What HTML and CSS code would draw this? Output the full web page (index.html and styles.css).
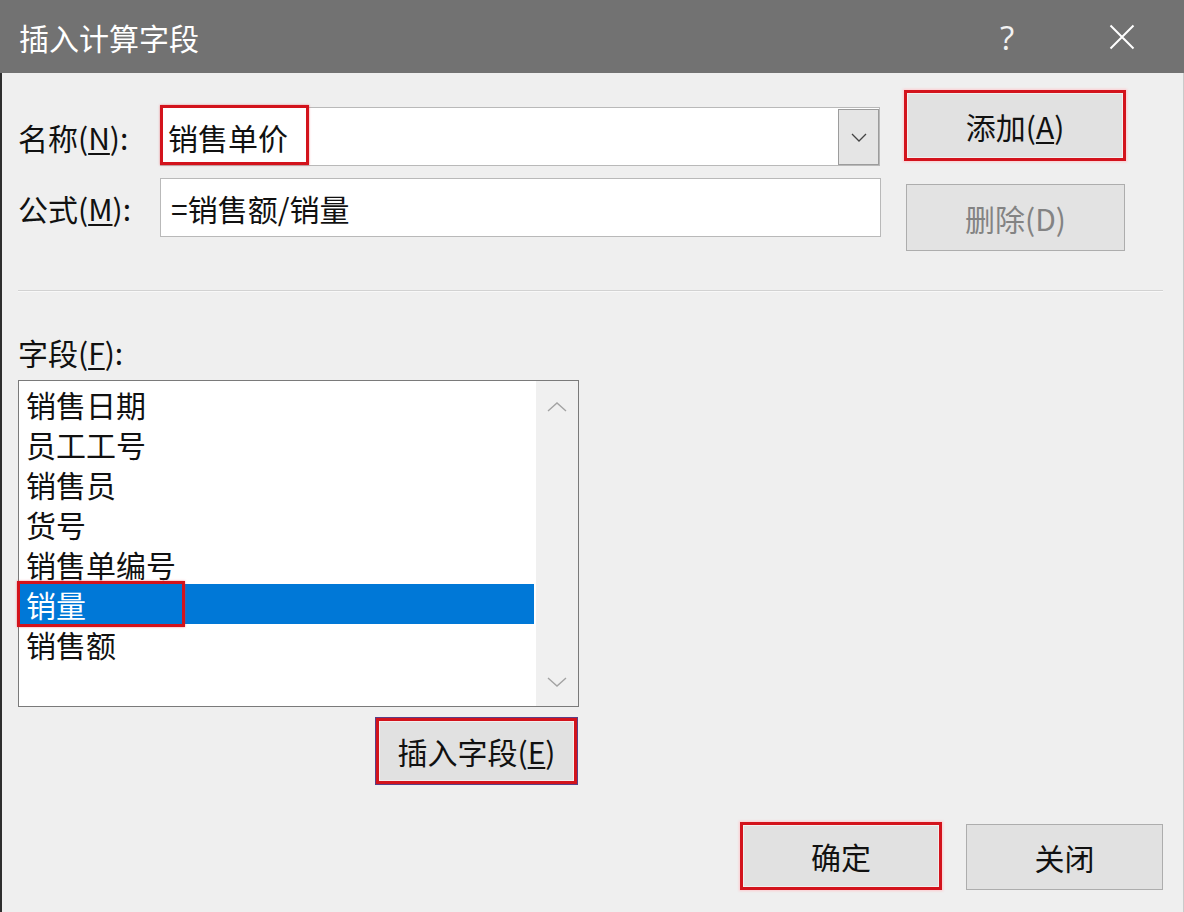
FILE: index.html
```html
<!DOCTYPE html>
<html lang="zh-CN">
<head>
<meta charset="utf-8">
<title>插入计算字段</title>
<link rel="stylesheet" href="styles.css">
</head>
<body>
<div class="dialog">
  <header class="titlebar">
    <h1 class="title">插入计算字段</h1>
    <div class="title-actions">
      <span class="help">?</span>
      <span class="close-x">
        <svg width="26" height="26" viewBox="0 0 26 26"><path d="M1.5 1.5L24.5 24.5M24.5 1.5L1.5 24.5" stroke="#ffffff" stroke-width="2" fill="none"/></svg>
      </span>
    </div>
  </header>
  <main class="content">
    <section class="top">
      <div class="fields">
        <div class="row row-name">
          <label class="label">名称(<u>N</u>):</label>
          <div class="combo">
            <div class="combo-input">
              <span class="value">销售单价</span>
              <span class="mark mark-name"></span>
            </div>
            <div class="combo-btn">
              <svg width="16" height="9" viewBox="0 0 16 9"><path d="M1 1L8 8L15 1" stroke="#444" stroke-width="1.3" fill="none"/></svg>
            </div>
          </div>
        </div>
        <div class="row row-formula">
          <label class="label">公式(<u>M</u>):</label>
          <div class="textbox"><span class="value value-formula">=销售额/销量</span></div>
        </div>
      </div>
      <div class="side-buttons">
        <button class="btn btn-add marked">添加(<u>A</u>)</button>
        <button class="btn btn-delete" disabled>删除(D)</button>
      </div>
    </section>
    <hr class="sep">
    <section class="field-section">
      <div class="label field-label">字段(<u>F</u>):</div>
      <div class="listbox">
        <ul class="items">
          <li>销售日期</li>
          <li>员工工号</li>
          <li>销售员</li>
          <li>货号</li>
          <li>销售单编号</li>
          <li class="selected">销量<span class="mark mark-item"></span></li>
          <li>销售额</li>
        </ul>
        <div class="scrollbar">
          <svg width="20" height="10" viewBox="0 0 20 10"><path d="M1 9L10 1L19 9" stroke="#a3a3a3" stroke-width="1.4" fill="none"/></svg>
          <svg width="20" height="10" viewBox="0 0 20 10"><path d="M1 1L10 9L19 1" stroke="#a3a3a3" stroke-width="1.4" fill="none"/></svg>
        </div>
      </div>
      <button class="btn btn-insert marked">插入字段(<u>E</u>)</button>
    </section>
    <footer class="footer">
      <button class="btn btn-ok marked">确定</button>
      <button class="btn btn-close">关闭</button>
    </footer>
  </main>
</div>
</body>
</html>
```

FILE: styles.css
```css
* {
  box-sizing: border-box;
}

html, body {
  margin: 0;
  padding: 0;
  width: 1184px;
  height: 912px;
  overflow: hidden;
  background: #efefef;
}

body {
  font-family: "Noto Sans CJK SC", "Noto Sans", sans-serif;
  font-size: 30px;
  color: #111;
}

.dialog {
  width: 1184px;
  height: 912px;
  display: flex;
  flex-direction: column;
}

.titlebar {
  height: 73px;
  flex: none;
  background: #727272;
  display: flex;
  align-items: center;
  justify-content: space-between;
  padding-left: 19px;
  padding-right: 40px;
}

.title {
  margin: 0;
  font-size: 30px;
  font-weight: normal;
  color: #ffffff;
  line-height: 36px;
}

.title-actions {
  display: flex;
  align-items: center;
  gap: 73px;
}

.help {
  width: 40px;
  text-align: center;
  color: #f2f2f2;
  font-family: "Open Sans", "Noto Sans", sans-serif;
  font-size: 33px;
  line-height: 36px;
  padding-top: 2px;
}

.close-x {
  width: 44px;
  height: 36px;
  display: flex;
  align-items: center;
  justify-content: center;
}

.content {
  flex: 1;
  display: flex;
  flex-direction: column;
  border-left: 2px solid #2e2e2e;
  border-right: 1px solid #cacaca;
  padding: 0 20px 0 16px;
  background: #efefef;
}

/* top form */
.top {
  display: flex;
  align-items: flex-start;
  height: 178px;
}

.fields {
  width: 863px;
  margin-top: 34px;
  display: flex;
  flex-direction: column;
  gap: 12px;
}

.row {
  display: flex;
  align-items: center;
  height: 59px;
}

.label {
  width: 142px;
  flex: none;
  line-height: 38px;
  color: #111;
}

.label u {
  text-decoration-thickness: 2px;
  text-underline-offset: 3px;
}

.combo {
  width: 720px;
  height: 59px;
  display: flex;
  background: #ffffff;
  border: 1px solid #b9b9b9;
}

.combo-input {
  position: relative;
  flex: 1;
  display: flex;
  align-items: center;
  padding-left: 7px;
}

.value {
  line-height: 38px;
  color: #111;
}

.mark {
  position: absolute;
  border: 3px solid #d3131c;
  box-shadow: 0 0 2px rgba(230, 60, 70, 0.6);
  pointer-events: none;
}

.mark-name {
  left: -1px;
  top: -3px;
  width: 149px;
  height: 60px;
}

.combo-btn {
  width: 41px;
  margin: 1px 0 0 0;
  background: #e5e5e5;
  border: 1px solid #9c9c9c;
  display: flex;
  align-items: center;
  justify-content: center;
}

.textbox {
  width: 721px;
  height: 59px;
  background: #ffffff;
  border: 1px solid #b9b9b9;
  display: flex;
  align-items: center;
  padding-left: 10px;
}

.side-buttons {
  margin-left: 23px;
  margin-top: 17px;
  display: flex;
  flex-direction: column;
  align-items: flex-start;
  gap: 23px;
}

.btn {
  font-family: "Noto Sans CJK SC", "Noto Sans", sans-serif;
  font-size: 30px;
  line-height: 38px;
  color: #111;
  background: #e1e1e1;
  border: 1px solid #adadad;
  padding: 0;
  margin: 0;
  display: flex;
  align-items: center;
  justify-content: center;
}

.btn u {
  text-decoration-thickness: 2px;
  text-underline-offset: 3px;
}

.marked {
  border: 3px solid #d3131c;
  box-shadow: 0 0 2px 1px rgba(255, 200, 205, 0.9), inset 0 0 0 1px #f3eeee;
}

.btn-add {
  width: 222px;
  height: 71px;
}

.btn-delete {
  width: 219px;
  height: 67px;
  margin-left: 2px;
  color: #838383;
  background: #e3e3e3;
}

.sep {
  margin: 39px 0 0 0;
  height: 0;
  border: none;
  border-top: 1px solid #d2d2d2;
  border-bottom: 1px solid #f8f8f8;
}

/* field list */
.field-section {
  width: 561px;
  display: flex;
  flex-direction: column;
}

.field-label {
  margin-top: 41px;
  width: auto;
}

.listbox {
  margin-top: 9px;
  height: 327px;
  display: flex;
  background: #ffffff;
  border: 1px solid #7a7a7a;
}

.items {
  list-style: none;
  margin: 0;
  padding: 3px 2px 0 1px;
  flex: 1;
}

.items li {
  position: relative;
  height: 40px;
  line-height: 40px;
  padding-left: 6px;
  color: #111;
}

.items li.selected {
  background: #0078d7;
  color: #ffffff;
}

.mark-item {
  left: -3px;
  top: -3px;
  width: 168px;
  height: 46px;
}

.scrollbar {
  width: 42px;
  background: #f0f0f0;
  display: flex;
  flex-direction: column;
  align-items: center;
  justify-content: space-between;
  padding: 21px 0 19px 0;
}

.btn-insert {
  align-self: flex-end;
  margin-top: 11px;
  margin-right: 2px;
  width: 201px;
  height: 66px;
  box-shadow: 0 0 0 1px #5b3f86, inset 0 0 0 1px #f3eeee;
}

/* footer */
.footer {
  margin-top: 38px;
  display: flex;
  justify-content: flex-end;
  align-items: flex-end;
  gap: 24px;
}

.btn-ok {
  width: 202px;
  height: 68px;
}

.btn-close {
  width: 197px;
  height: 66px;
}
```
